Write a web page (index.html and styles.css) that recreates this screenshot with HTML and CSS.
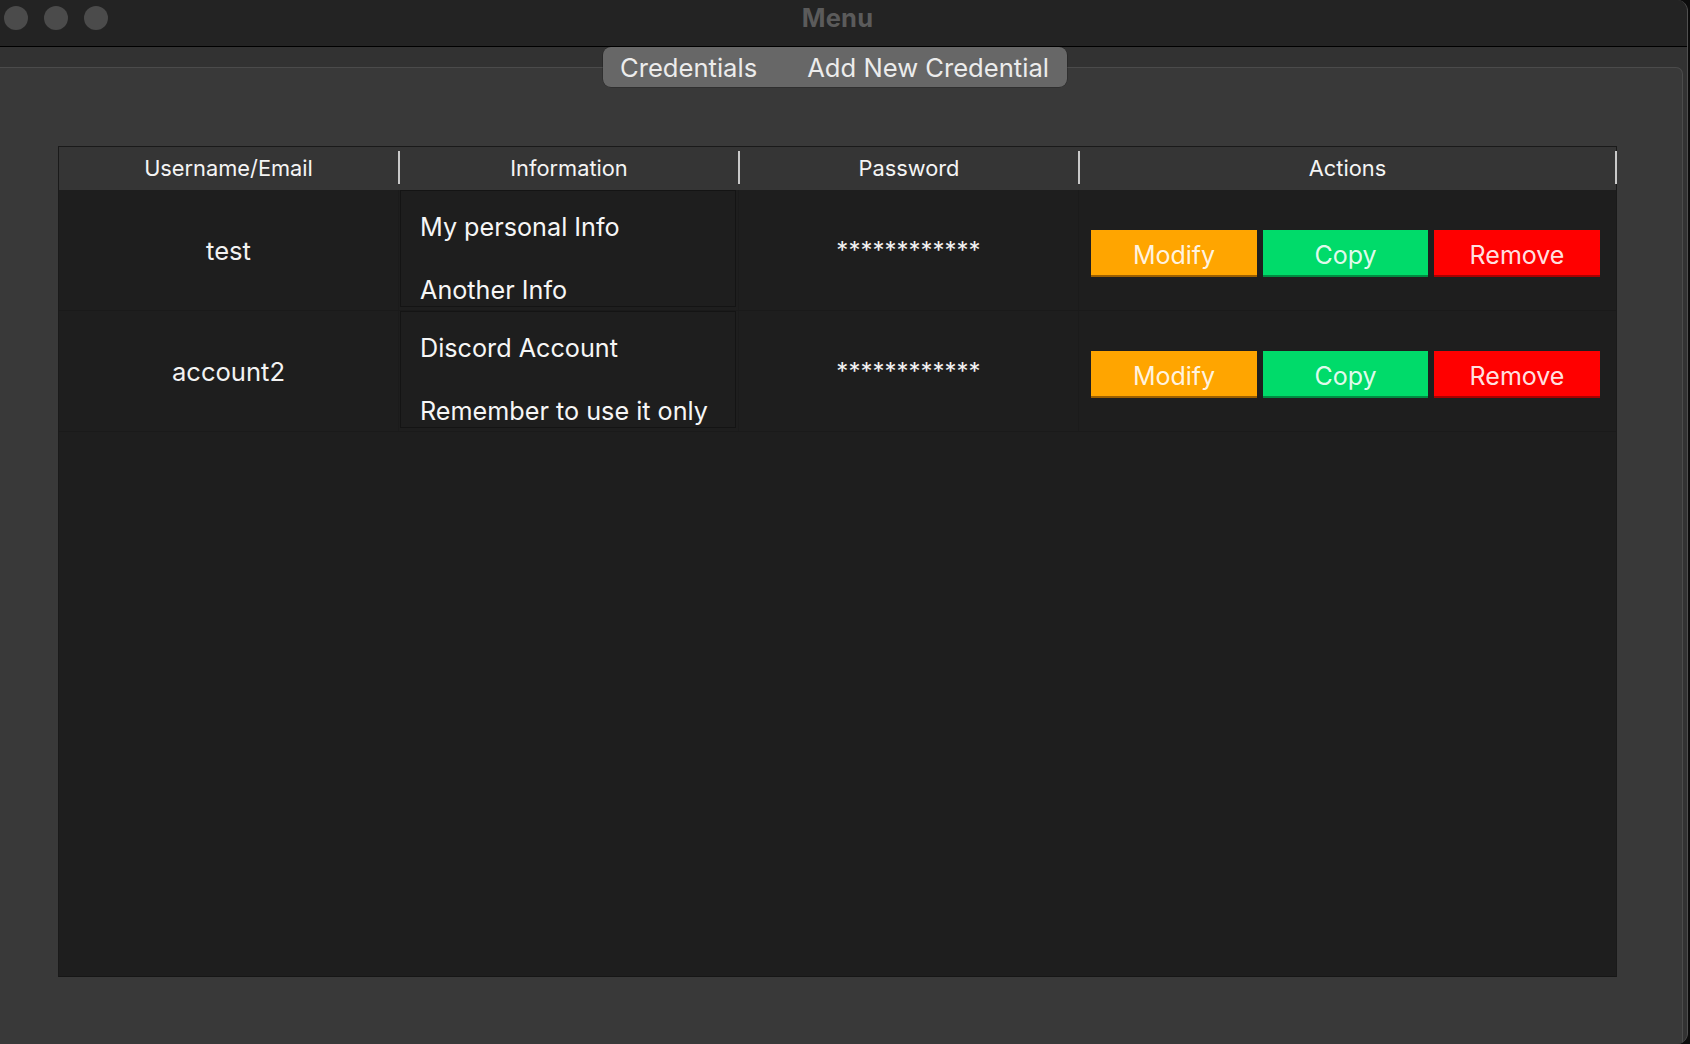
FILE: index.html
```html
<!DOCTYPE html>
<html lang="en">
<head>
<meta charset="utf-8">
<title>Menu</title>
<link rel="stylesheet" href="styles.css">
</head>
<body>
<div class="window">
  <header class="titlebar">
    <div class="lights">
      <span class="light"></span>
      <span class="light"></span>
      <span class="light"></span>
    </div>
    <div class="title">Menu</div>
    <div class="spacer"></div>
  </header>
  <main class="content">
    <nav class="tabs">
      <span class="tab">Credentials</span>
      <span class="tab">Add New Credential</span>
    </nav>
    <section class="tabbox">
      <div class="table">
        <div class="thead">
          <div class="th">Username/Email</div>
          <span class="sep"></span>
          <div class="th">Information</div>
          <span class="sep"></span>
          <div class="th">Password</div>
          <span class="sep"></span>
          <div class="th">Actions</div>
          <span class="sep"></span>
        </div>
        <div class="tbody">
          <div class="row">
            <div class="cell user">test</div>
            <div class="cell info">
              <div class="infobox">
                <div class="infotext">
                  <p class="line">My personal Info</p>
                  <p class="line">Another Info</p>
                </div>
              </div>
            </div>
            <div class="cell pass">************</div>
            <div class="cell actions">
              <button class="btn modify">Modify</button>
              <button class="btn copy">Copy</button>
              <button class="btn remove">Remove</button>
            </div>
          </div>
          <div class="row">
            <div class="cell user">account2</div>
            <div class="cell info">
              <div class="infobox">
                <div class="infotext">
                  <p class="line">Discord Account</p>
                  <p class="line">Remember to use it only</p>
                </div>
              </div>
            </div>
            <div class="cell pass">************</div>
            <div class="cell actions">
              <button class="btn modify">Modify</button>
              <button class="btn copy">Copy</button>
              <button class="btn remove">Remove</button>
            </div>
          </div>
        </div>
      </div>
    </section>
  </main>
</div>
</body>
</html>
```

FILE: styles.css
```css
* { box-sizing: border-box; }

html, body {
  margin: 0;
  padding: 0;
  height: 100%;
}

body {
  background: #0c0c0c;
  font-family: Inter, "Liberation Sans", Arial, sans-serif;
  color: #f2f2f2;
  overflow: hidden;
}

.window {
  width: 1688px;
  height: 1044px;
  display: flex;
  flex-direction: column;
  background: #393939;
  border-right: 1px solid #505050;
  border-radius: 0 11px 11px 0;
  overflow: hidden;
}

/* Title bar */
.titlebar {
  height: 47px;
  flex: none;
  background: #232323;
  border-bottom: 1px solid #000;
  display: grid;
  grid-template-columns: 1fr auto 1fr;
  align-items: center;
  padding-right: 12px;
}

.lights {
  display: flex;
  gap: 16px;
  padding-left: 4px;
  align-self: start;
  padding-top: 6px;
}

.light {
  width: 24px;
  height: 24px;
  border-radius: 50%;
  background: #4b4b4b;
}

.title {
  font-weight: 700;
  font-size: 25.5px;
  color: #5b5b5b;
  letter-spacing: 0.2px;
  padding-bottom: 11px;
}

/* Content */
.content {
  flex: 1;
  display: flex;
  flex-direction: column;
  background: #323232;
}

.tabs {
  position: relative;
  z-index: 1;
  align-self: flex-start;
  margin-left: 603px;
  height: 40px;
  display: flex;
  align-items: center;
  gap: 50px;
  padding: 0 18px 0 17px;
  background: #676767;
  border-radius: 8px;
  box-shadow: 0 0 0 0.5px rgba(0, 0, 0, 0.35);
  font-size: 25.6px;
  color: #ececec;
  margin-bottom: -20px;
}

.tab { white-space: nowrap; }

.tabbox {
  flex: 1;
  width: 1683px;
  background: #393939;
  border-top: 1px solid #4b4b4b;
  border-right: 1px solid #4b4b4b;
  border-top-right-radius: 7px;
  padding: 78px 0 0 58px;
}

/* Table */
.table {
  width: 1559px;
  height: 831px;
  border: 1px solid #1a1a1a;
  border-bottom-color: #161616;
  background: #1e1e1e;
  display: flex;
  flex-direction: column;
}

.thead {
  height: 43px;
  flex: none;
  background: #353535;
  display: grid;
  grid-template-columns: 339px 2px 338px 2px 338px 2px 535px 2px;
}

.th {
  display: flex;
  align-items: center;
  justify-content: center;
  font-size: 21.8px;
  color: #f4f4f4;
  padding-bottom: 2px;
}

.sep {
  margin-top: 4px;
  height: 33px;
  background: #c9c9c9;
}

.row {
  display: grid;
  grid-template-columns: 340px 340px 340px 1fr;
  height: 121px;
  border-bottom: 1px solid #1a1a1a;
}

.cell {
  border-right: 1px solid #1b1b1b;
}

.cell:last-child { border-right: none; }

.user {
  display: flex;
  align-items: center;
  justify-content: center;
  font-size: 25.6px;
  padding-top: 1px;
}

.info {
  padding: 0 2px 3px 1px;
}

.infobox {
  height: 117px;
  border: 1px solid #141414;
  background: #1e1e1e;
  padding: 0 0 0 19px;
}

.infotext {
  padding-top: 24px;
  display: flex;
  flex-direction: column;
  gap: 39px;
}

.line {
  margin: 0;
  font-size: 25.2px;
  line-height: 24px;
  white-space: nowrap;
  color: #f6f6f6;
}

.pass {
  display: flex;
  align-items: center;
  justify-content: center;
  font-size: 24px;
  letter-spacing: 0;
  padding-top: 1px;
}

.actions {
  display: flex;
  align-items: flex-start;
  gap: 6px;
  padding: 40px 0 0 12px;
}

.btn {
  width: 166px;
  height: 47px;
  border: none;
  border-bottom: 2px solid;
  padding: 4px 0 0;
  font-family: inherit;
  font-size: 25px;
  color: rgba(255, 255, 255, 0.9);
  cursor: pointer;
}

.modify { background: #ffa500; border-bottom-color: #9c5f00; }
.copy { background: #00db6a; border-bottom-color: #008c42; width: 165px; }
.remove { background: #ff0000; border-bottom-color: #a80000; }
```
